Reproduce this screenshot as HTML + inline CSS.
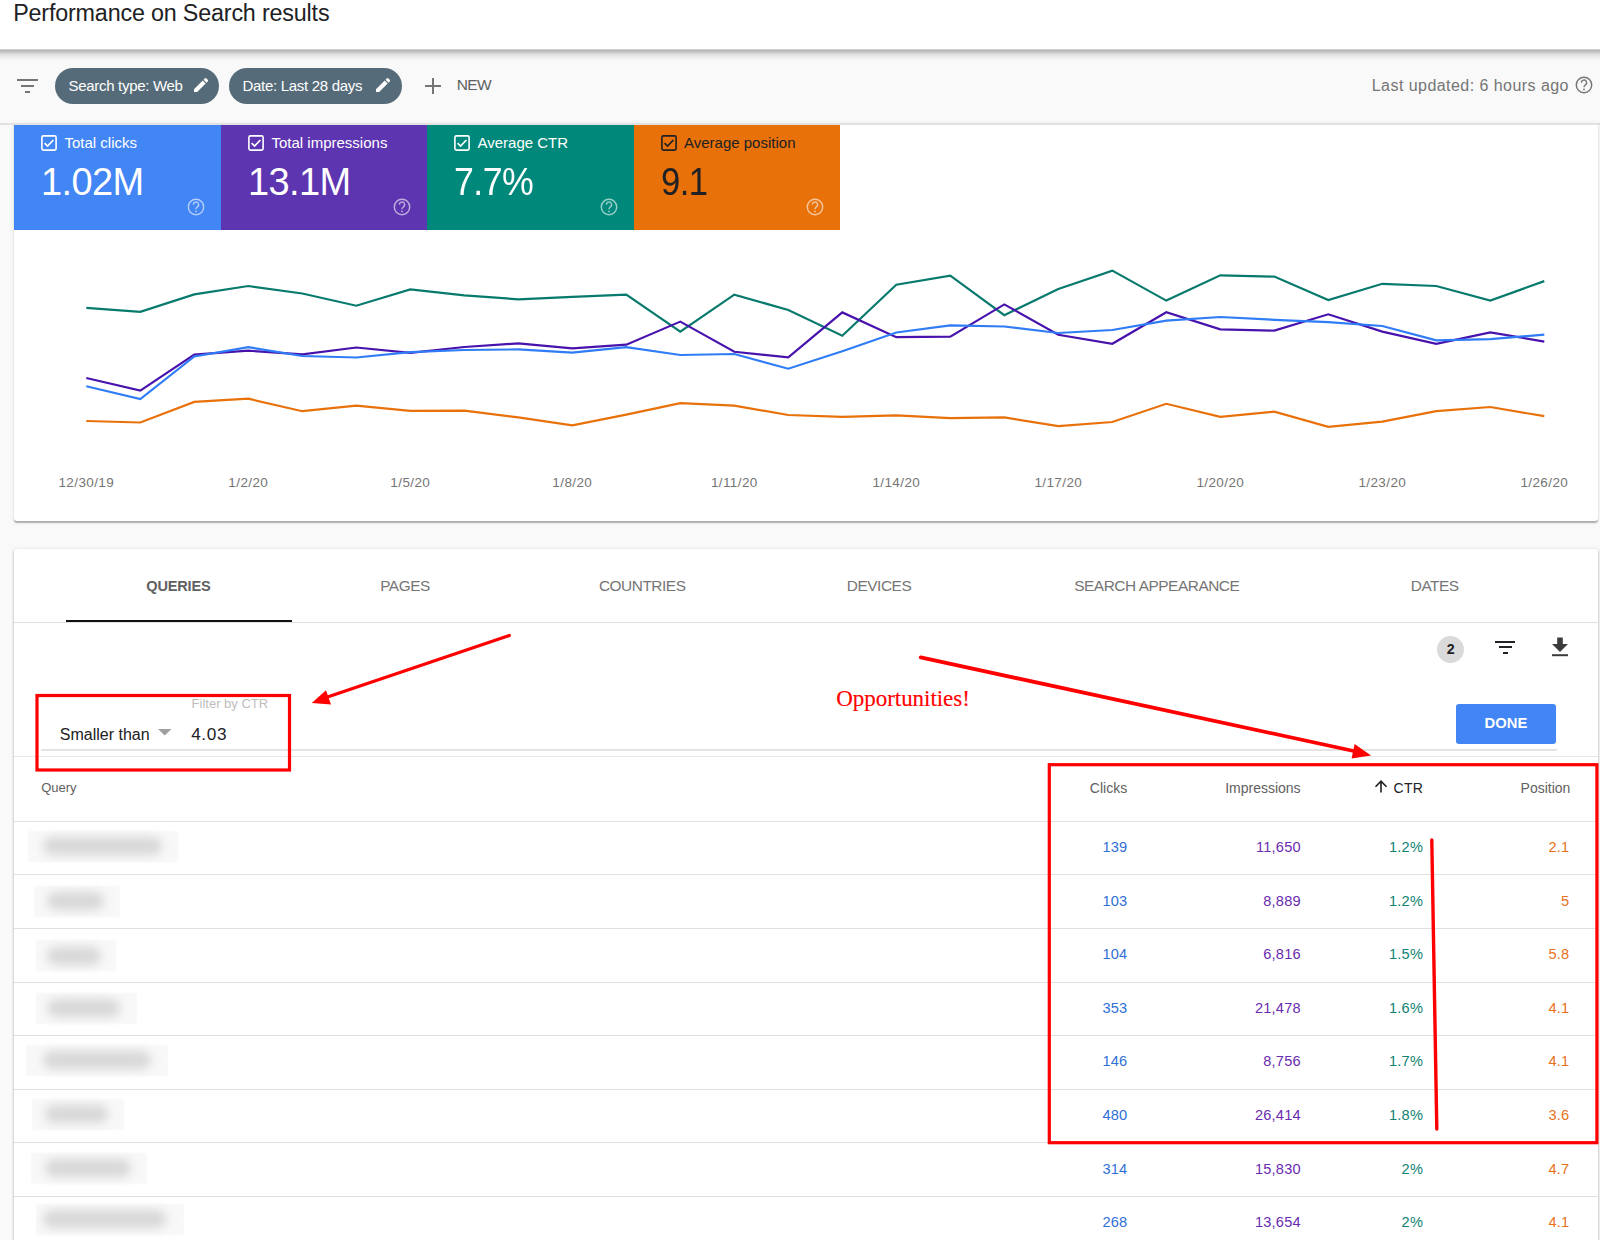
<!DOCTYPE html>
<html><head><meta charset="utf-8"><title>Performance on Search results</title>
<style>
html,body{margin:0;padding:0;}
body{width:1600px;height:1240px;overflow:hidden;position:relative;background:#f9f9f9;font-family:'Liberation Sans', sans-serif;}
.t{position:absolute;white-space:nowrap;}
</style></head><body>
<div style="position:absolute;left:0;top:0;width:1600px;height:50px;background:#fff;"></div><div class="t" style="top:1.88px;font-size:23.3px;line-height:23.3px;color:#202124;font-weight:400;letter-spacing:-0.17px;left:13.2px;">Performance on Search results</div>
<div style="position:absolute;left:0;top:49px;width:1600px;height:12px;background:linear-gradient(#dcdcdc 0,#b6b6b6 12%,#c6c6c6 25%,#dedede 45%,#efefef 70%,#f9f9f9 100%);"></div><div style="position:absolute;left:17px;top:79px;width:20.5px;height:2px;background:#757575"></div><div style="position:absolute;left:21px;top:85px;width:12.5px;height:2px;background:#757575"></div><div style="position:absolute;left:25px;top:91px;width:4.5px;height:2px;background:#757575"></div><div style="position:absolute;left:55px;top:68px;width:164px;height:36px;border-radius:18px;background:#566b79"></div><div class="t" style="top:78.30px;font-size:15px;line-height:15px;color:#fff;font-weight:400;letter-spacing:-0.3px;left:68.5px;">Search type: Web</div>
<div style="position:absolute;left:228.5px;top:68px;width:173.0px;height:36px;border-radius:18px;background:#566b79"></div><div class="t" style="top:78.30px;font-size:15px;line-height:15px;color:#fff;font-weight:400;letter-spacing:-0.3px;left:242.5px;">Date: Last 28 days</div>
<svg style="position:absolute;left:193.9px;top:78.2px" width="14.2" height="14.2" viewBox="3 3 18 18"><path fill="#fff" d="M3 17.25V21h3.75L17.81 9.94l-3.75-3.75L3 17.25zM20.71 7.04a.996.996 0 0 0 0-1.41l-2.34-2.34a.996.996 0 0 0-1.41 0l-1.83 1.83 3.75 3.75 1.83-1.83z"/></svg><svg style="position:absolute;left:375.9px;top:78.2px" width="14.2" height="14.2" viewBox="3 3 18 18"><path fill="#fff" d="M3 17.25V21h3.75L17.81 9.94l-3.75-3.75L3 17.25zM20.71 7.04a.996.996 0 0 0 0-1.41l-2.34-2.34a.996.996 0 0 0-1.41 0l-1.83 1.83 3.75 3.75 1.83-1.83z"/></svg><div style="position:absolute;left:425px;top:84.5px;width:16px;height:2px;background:#757575"></div><div style="position:absolute;left:432px;top:77.5px;width:2px;height:16px;background:#757575"></div><div class="t" style="top:77.48px;font-size:15.5px;line-height:15.5px;color:#616161;font-weight:400;letter-spacing:-0.65px;left:456.8px;">NEW</div>
<div class="t" style="top:77.76px;font-size:16px;line-height:16px;color:#757575;font-weight:400;letter-spacing:0.45px;right:31.5px;margin-right:-0.45px;">Last updated: 6 hours ago</div>
<svg style="position:absolute;left:1574.4px;top:75.2px" width="20" height="20" viewBox="-10 -10 20 20"><circle cx="0" cy="0" r="7.7" fill="none" stroke="#757575" stroke-width="1.45"/><path d="M-2.6 -2.3 A2.6 2.6 0 1 1 1.2 0 C0.3 0.6 0 1 0 2.2" fill="none" stroke="#757575" stroke-width="1.4"/><circle cx="0" cy="4.4" r="0.9" fill="#757575"/></svg><div style="position:absolute;left:0;top:122.5px;width:1600px;height:2px;background:#e2e2e2"></div><div style="position:absolute;left:14px;top:123px;width:1584px;height:398px;background:#fff;border-radius:0 0 3px 3px;box-shadow:0 1.5px 1px rgba(0,0,0,0.26),0 1px 4px rgba(0,0,0,0.1);"></div><div style="position:absolute;left:14px;top:123px;width:1584px;height:2px;background:#e2e2e2"></div><div style="position:absolute;left:14px;top:125px;width:207px;height:105px;background:#4285f4"></div><svg style="position:absolute;left:40px;top:134px" width="18" height="18" viewBox="0 0 18 18"><rect x="1.9" y="1.9" width="14.2" height="14.2" rx="1.5" fill="none" stroke="#fff" stroke-width="1.6"/><path d="M4.6 9.2 L7.6 12 L13.4 6" fill="none" stroke="#fff" stroke-width="1.7"/></svg><div class="t" style="top:135.00px;font-size:15px;line-height:15px;color:#fff;font-weight:400;left:64.5px;">Total clicks</div>
<div class="t" style="top:163.23px;font-size:38px;line-height:38px;color:#fff;font-weight:400;letter-spacing:-0.6px;left:41px;transform:scaleX(1);transform-origin:0 0;">1.02M</div>
<svg style="position:absolute;left:186.2px;top:197.4px" width="20" height="20" viewBox="-10 -10 20 20"><circle cx="0" cy="0" r="7.7" fill="none" stroke="rgba(255,255,255,0.6)" stroke-width="1.45"/><path d="M-2.6 -2.3 A2.6 2.6 0 1 1 1.2 0 C0.3 0.6 0 1 0 2.2" fill="none" stroke="rgba(255,255,255,0.6)" stroke-width="1.4"/><circle cx="0" cy="4.4" r="0.9" fill="rgba(255,255,255,0.6)"/></svg><div style="position:absolute;left:221px;top:125px;width:206px;height:105px;background:#5e35b1"></div><svg style="position:absolute;left:247px;top:134px" width="18" height="18" viewBox="0 0 18 18"><rect x="1.9" y="1.9" width="14.2" height="14.2" rx="1.5" fill="none" stroke="#fff" stroke-width="1.6"/><path d="M4.6 9.2 L7.6 12 L13.4 6" fill="none" stroke="#fff" stroke-width="1.7"/></svg><div class="t" style="top:135.00px;font-size:15px;line-height:15px;color:#fff;font-weight:400;left:271.5px;">Total impressions</div>
<div class="t" style="top:163.23px;font-size:38px;line-height:38px;color:#fff;font-weight:400;letter-spacing:-0.6px;left:248px;transform:scaleX(1);transform-origin:0 0;">13.1M</div>
<svg style="position:absolute;left:392.2px;top:197.4px" width="20" height="20" viewBox="-10 -10 20 20"><circle cx="0" cy="0" r="7.7" fill="none" stroke="rgba(255,255,255,0.6)" stroke-width="1.45"/><path d="M-2.6 -2.3 A2.6 2.6 0 1 1 1.2 0 C0.3 0.6 0 1 0 2.2" fill="none" stroke="rgba(255,255,255,0.6)" stroke-width="1.4"/><circle cx="0" cy="4.4" r="0.9" fill="rgba(255,255,255,0.6)"/></svg><div style="position:absolute;left:427px;top:125px;width:206.5px;height:105px;background:#00897b"></div><svg style="position:absolute;left:453px;top:134px" width="18" height="18" viewBox="0 0 18 18"><rect x="1.9" y="1.9" width="14.2" height="14.2" rx="1.5" fill="none" stroke="#fff" stroke-width="1.6"/><path d="M4.6 9.2 L7.6 12 L13.4 6" fill="none" stroke="#fff" stroke-width="1.7"/></svg><div class="t" style="top:135.00px;font-size:15px;line-height:15px;color:#fff;font-weight:400;left:477.5px;">Average CTR</div>
<div class="t" style="top:163.23px;font-size:38px;line-height:38px;color:#fff;font-weight:400;letter-spacing:-0.6px;left:454px;transform:scaleX(0.94);transform-origin:0 0;">7.7%</div>
<svg style="position:absolute;left:598.7px;top:197.4px" width="20" height="20" viewBox="-10 -10 20 20"><circle cx="0" cy="0" r="7.7" fill="none" stroke="rgba(255,255,255,0.6)" stroke-width="1.45"/><path d="M-2.6 -2.3 A2.6 2.6 0 1 1 1.2 0 C0.3 0.6 0 1 0 2.2" fill="none" stroke="rgba(255,255,255,0.6)" stroke-width="1.4"/><circle cx="0" cy="4.4" r="0.9" fill="rgba(255,255,255,0.6)"/></svg><div style="position:absolute;left:633.5px;top:125px;width:206.5px;height:105px;background:#e8710a"></div><svg style="position:absolute;left:659.5px;top:134px" width="18" height="18" viewBox="0 0 18 18"><rect x="1.9" y="1.9" width="14.2" height="14.2" rx="1.5" fill="none" stroke="#202124" stroke-width="1.6"/><path d="M4.6 9.2 L7.6 12 L13.4 6" fill="none" stroke="#202124" stroke-width="1.7"/></svg><div class="t" style="top:135.00px;font-size:15px;line-height:15px;color:#202124;font-weight:400;left:684.0px;">Average position</div>
<div class="t" style="top:163.23px;font-size:38px;line-height:38px;color:#202124;font-weight:400;letter-spacing:-0.6px;left:660.5px;transform:scaleX(0.91);transform-origin:0 0;">9.1</div>
<svg style="position:absolute;left:805.2px;top:197.4px" width="20" height="20" viewBox="-10 -10 20 20"><circle cx="0" cy="0" r="7.7" fill="none" stroke="rgba(255,255,255,0.6)" stroke-width="1.45"/><path d="M-2.6 -2.3 A2.6 2.6 0 1 1 1.2 0 C0.3 0.6 0 1 0 2.2" fill="none" stroke="rgba(255,255,255,0.6)" stroke-width="1.4"/><circle cx="0" cy="4.4" r="0.9" fill="rgba(255,255,255,0.6)"/></svg><svg style="position:absolute;left:0;top:0" width="1600" height="560"><polyline points="86.3,421.0 140.3,422.5 194.3,401.9 248.3,398.7 302.3,411.2 356.3,405.6 410.3,410.9 464.3,410.7 518.3,417.4 572.3,425.3 626.3,414.6 680.3,403.2 734.3,405.6 788.3,415.0 842.3,416.9 896.3,415.4 950.3,418.2 1004.3,417.4 1058.3,426.2 1112.3,422.0 1166.3,403.8 1220.3,416.9 1274.3,411.6 1328.3,426.8 1382.3,421.6 1436.3,411.2 1490.3,407.0 1544.3,416.2" fill="none" stroke="#e8710a" stroke-width="2.2" stroke-linejoin="miter"/><polyline points="86.3,307.8 140.3,311.9 194.3,294.4 248.3,286.0 302.3,293.5 356.3,305.7 410.3,289.4 464.3,295.4 518.3,299.3 572.3,296.9 626.3,294.6 680.3,331.6 734.3,294.6 788.3,310.0 842.3,335.7 896.3,284.7 950.3,275.7 1004.3,315.2 1058.3,289.0 1112.3,270.6 1166.3,300.6 1220.3,275.3 1274.3,276.6 1328.3,300.0 1382.3,283.8 1436.3,286.0 1490.3,300.6 1544.3,281.1" fill="none" stroke="#077a6d" stroke-width="2.2" stroke-linejoin="miter"/><polyline points="86.3,378.0 140.3,390.6 194.3,354.6 248.3,350.7 302.3,354.4 356.3,347.5 410.3,352.8 464.3,347.0 518.3,343.4 572.3,348.4 626.3,344.7 680.3,321.6 734.3,351.8 788.3,357.4 842.3,312.4 896.3,337.2 950.3,336.6 1004.3,304.4 1058.3,334.8 1112.3,343.8 1166.3,312.2 1220.3,329.3 1274.3,330.6 1328.3,314.3 1382.3,331.6 1436.3,343.8 1490.3,332.3 1544.3,341.6" fill="none" stroke="#4812ad" stroke-width="2.2" stroke-linejoin="miter"/><polyline points="86.3,386.3 140.3,399.0 194.3,356.5 248.3,347.1 302.3,356.0 356.3,357.5 410.3,352.2 464.3,350.0 518.3,349.4 572.3,352.6 626.3,347.1 680.3,355.0 734.3,354.0 788.3,368.7 842.3,351.2 896.3,332.5 950.3,325.4 1004.3,326.5 1058.3,333.0 1112.3,330.0 1166.3,320.7 1220.3,317.0 1274.3,319.8 1328.3,322.2 1382.3,326.0 1436.3,340.3 1490.3,339.1 1544.3,334.7" fill="none" stroke="#2f7cf6" stroke-width="2.2" stroke-linejoin="miter"/></svg><div class="t" style="top:476.07px;font-size:13.5px;line-height:13.5px;color:#757575;font-weight:400;letter-spacing:0.4px;left:-313.7px;width:800px;text-align:center;">12/30/19</div>
<div class="t" style="top:476.07px;font-size:13.5px;line-height:13.5px;color:#757575;font-weight:400;letter-spacing:0.4px;left:-151.7px;width:800px;text-align:center;">1/2/20</div>
<div class="t" style="top:476.07px;font-size:13.5px;line-height:13.5px;color:#757575;font-weight:400;letter-spacing:0.4px;left:10.300000000000011px;width:800px;text-align:center;">1/5/20</div>
<div class="t" style="top:476.07px;font-size:13.5px;line-height:13.5px;color:#757575;font-weight:400;letter-spacing:0.4px;left:172.29999999999995px;width:800px;text-align:center;">1/8/20</div>
<div class="t" style="top:476.07px;font-size:13.5px;line-height:13.5px;color:#757575;font-weight:400;letter-spacing:0.4px;left:334.29999999999995px;width:800px;text-align:center;">1/11/20</div>
<div class="t" style="top:476.07px;font-size:13.5px;line-height:13.5px;color:#757575;font-weight:400;letter-spacing:0.4px;left:496.29999999999995px;width:800px;text-align:center;">1/14/20</div>
<div class="t" style="top:476.07px;font-size:13.5px;line-height:13.5px;color:#757575;font-weight:400;letter-spacing:0.4px;left:658.3px;width:800px;text-align:center;">1/17/20</div>
<div class="t" style="top:476.07px;font-size:13.5px;line-height:13.5px;color:#757575;font-weight:400;letter-spacing:0.4px;left:820.3px;width:800px;text-align:center;">1/20/20</div>
<div class="t" style="top:476.07px;font-size:13.5px;line-height:13.5px;color:#757575;font-weight:400;letter-spacing:0.4px;left:982.3px;width:800px;text-align:center;">1/23/20</div>
<div class="t" style="top:476.07px;font-size:13.5px;line-height:13.5px;color:#757575;font-weight:400;letter-spacing:0.4px;left:1144.3px;width:800px;text-align:center;">1/26/20</div>
<div style="position:absolute;left:14px;top:548.5px;width:1584px;height:720px;background:#fff;border-radius:2px;box-shadow:0 1px 2px rgba(0,0,0,0.25),0 1px 3px 1px rgba(0,0,0,0.1);"></div><div class="t" style="top:579.04px;font-size:14.6px;line-height:14.6px;color:#616161;font-weight:700;letter-spacing:-0.2px;left:-221.6px;width:800px;text-align:center;">QUERIES</div>
<div class="t" style="top:578.36px;font-size:15.4px;line-height:15.4px;color:#757575;font-weight:400;letter-spacing:-0.45px;left:5px;width:800px;text-align:center;">PAGES</div>
<div class="t" style="top:578.36px;font-size:15.4px;line-height:15.4px;color:#757575;font-weight:400;letter-spacing:-0.45px;left:242.20000000000005px;width:800px;text-align:center;">COUNTRIES</div>
<div class="t" style="top:578.36px;font-size:15.4px;line-height:15.4px;color:#757575;font-weight:400;letter-spacing:-0.45px;left:479px;width:800px;text-align:center;">DEVICES</div>
<div class="t" style="top:578.36px;font-size:15.4px;line-height:15.4px;color:#757575;font-weight:400;letter-spacing:-0.45px;left:756.8px;width:800px;text-align:center;">SEARCH APPEARANCE</div>
<div class="t" style="top:578.36px;font-size:15.4px;line-height:15.4px;color:#757575;font-weight:400;letter-spacing:-0.45px;left:1034.7px;width:800px;text-align:center;">DATES</div>
<div style="position:absolute;left:14px;top:622px;width:1584px;height:1px;background:#e0e0e0"></div><div style="position:absolute;left:65.5px;top:620.2px;width:226px;height:2px;background:#111"></div><div style="position:absolute;left:1437px;top:636px;width:27px;height:27px;border-radius:50%;background:#dadada"></div><div class="t" style="top:641.58px;font-size:14.2px;line-height:14.2px;color:#202124;font-weight:700;left:1050.6px;width:800px;text-align:center;">2</div>
<div style="position:absolute;left:1494.7px;top:641px;width:20.700000000000045px;height:2px;background:#202124"></div><div style="position:absolute;left:1498.7px;top:646.4px;width:13.0px;height:2px;background:#202124"></div><div style="position:absolute;left:1503px;top:652.3px;width:4.5px;height:2px;background:#202124"></div><svg style="position:absolute;left:1552px;top:637px" width="16" height="20" viewBox="0 0 16 20"><path d="M5.2 0.5 H10.8 V7 H16 L8 15 L0 7 H5.2 Z" fill="#3c3c3c"/><rect x="0" y="17.2" width="16" height="2" fill="#3c3c3c"/></svg><div style="position:absolute;left:1456px;top:704px;width:100px;height:40px;border-radius:3px;background:#4285f4"></div><div class="t" style="top:716.47px;font-size:14.8px;line-height:14.8px;color:#fff;font-weight:700;left:1106px;width:800px;text-align:center;">DONE</div>
<div class="t" style="top:697.00px;font-size:13px;line-height:13px;color:#bdbdbd;font-weight:400;left:191.6px;">Filter by CTR</div>
<div class="t" style="top:726.86px;font-size:16px;line-height:16px;color:#202124;font-weight:400;left:59.75px;">Smaller than</div>
<svg style="position:absolute;left:158px;top:729px" width="14" height="7" viewBox="0 0 14 7"><path d="M0 0 H13.5 L6.75 6.5 Z" fill="#a0a0a0"/></svg><div class="t" style="top:725.64px;font-size:17.2px;line-height:17.2px;color:#202124;font-weight:400;letter-spacing:0.6px;left:191.2px;">4.03</div>
<div style="position:absolute;left:41px;top:749px;width:1515.5px;height:2px;background:#e4e4e4"></div><div style="position:absolute;left:14px;top:756px;width:1584px;height:1px;background:#e6e6e6"></div><div class="t" style="top:781.20px;font-size:13px;line-height:13px;color:#616161;font-weight:400;left:41.2px;">Query</div>
<div class="t" style="top:780.95px;font-size:14px;line-height:14px;color:#616161;font-weight:400;right:472.79999999999995px;">Clicks</div>
<div class="t" style="top:780.95px;font-size:14px;line-height:14px;color:#616161;font-weight:400;right:299.4000000000001px;">Impressions</div>
<div class="t" style="top:780.95px;font-size:14px;line-height:14px;color:#202124;font-weight:400;letter-spacing:0.3px;right:177.0999999999999px;margin-right:-0.3px;">CTR</div>
<svg style="position:absolute;left:1374px;top:780px" width="14" height="13" viewBox="0 0 14 13"><path d="M7 1.5 V12.5 M1.5 6.8 L7 1.2 L12.5 6.8" fill="none" stroke="#202124" stroke-width="1.6"/></svg><div class="t" style="top:780.95px;font-size:14px;line-height:14px;color:#616161;font-weight:400;right:29.59999999999991px;">Position</div>
<div style="position:absolute;left:14px;top:820.80px;width:1584px;height:1px;background:#e0e0e0"></div><div class="t" style="top:840.04px;font-size:14.6px;line-height:14.6px;color:#2f6fd6;font-weight:400;letter-spacing:0.2px;right:472.79999999999995px;margin-right:-0.2px;">139</div>
<div class="t" style="top:840.04px;font-size:14.6px;line-height:14.6px;color:#6a2bb0;font-weight:400;letter-spacing:0.2px;right:299.4000000000001px;margin-right:-0.2px;">11,650</div>
<div class="t" style="top:840.04px;font-size:14.6px;line-height:14.6px;color:#108272;font-weight:400;letter-spacing:0.2px;right:177.0999999999999px;margin-right:-0.2px;">1.2%</div>
<div class="t" style="top:840.04px;font-size:14.6px;line-height:14.6px;color:#e8711a;font-weight:400;letter-spacing:0.2px;right:30.90000000000009px;margin-right:-0.2px;">2.1</div>
<div style="position:absolute;left:28px;top:830.5px;width:150px;height:31px;background:#f8f8f8;filter:blur(1px)"></div><div style="position:absolute;left:43px;top:837.0px;width:119px;height:18px;border-radius:9px;background:#d8d8d8;filter:blur(5px)"></div><div style="position:absolute;left:14px;top:874.40px;width:1584px;height:1px;background:#e0e0e0"></div><div class="t" style="top:893.64px;font-size:14.6px;line-height:14.6px;color:#2f6fd6;font-weight:400;letter-spacing:0.2px;right:472.79999999999995px;margin-right:-0.2px;">103</div>
<div class="t" style="top:893.64px;font-size:14.6px;line-height:14.6px;color:#6a2bb0;font-weight:400;letter-spacing:0.2px;right:299.4000000000001px;margin-right:-0.2px;">8,889</div>
<div class="t" style="top:893.64px;font-size:14.6px;line-height:14.6px;color:#108272;font-weight:400;letter-spacing:0.2px;right:177.0999999999999px;margin-right:-0.2px;">1.2%</div>
<div class="t" style="top:893.64px;font-size:14.6px;line-height:14.6px;color:#e8711a;font-weight:400;letter-spacing:0.2px;right:30.90000000000009px;margin-right:-0.2px;">5</div>
<div style="position:absolute;left:34px;top:885.5px;width:86px;height:31px;background:#f8f8f8;filter:blur(1px)"></div><div style="position:absolute;left:47px;top:892.0px;width:57px;height:18px;border-radius:9px;background:#d8d8d8;filter:blur(5px)"></div><div style="position:absolute;left:14px;top:928.00px;width:1584px;height:1px;background:#e0e0e0"></div><div class="t" style="top:947.24px;font-size:14.6px;line-height:14.6px;color:#2f6fd6;font-weight:400;letter-spacing:0.2px;right:472.79999999999995px;margin-right:-0.2px;">104</div>
<div class="t" style="top:947.24px;font-size:14.6px;line-height:14.6px;color:#6a2bb0;font-weight:400;letter-spacing:0.2px;right:299.4000000000001px;margin-right:-0.2px;">6,816</div>
<div class="t" style="top:947.24px;font-size:14.6px;line-height:14.6px;color:#108272;font-weight:400;letter-spacing:0.2px;right:177.0999999999999px;margin-right:-0.2px;">1.5%</div>
<div class="t" style="top:947.24px;font-size:14.6px;line-height:14.6px;color:#e8711a;font-weight:400;letter-spacing:0.2px;right:30.90000000000009px;margin-right:-0.2px;">5.8</div>
<div style="position:absolute;left:36px;top:940.0px;width:80px;height:31px;background:#f8f8f8;filter:blur(1px)"></div><div style="position:absolute;left:47px;top:946.5px;width:54px;height:18px;border-radius:9px;background:#d8d8d8;filter:blur(5px)"></div><div style="position:absolute;left:14px;top:981.60px;width:1584px;height:1px;background:#e0e0e0"></div><div class="t" style="top:1000.84px;font-size:14.6px;line-height:14.6px;color:#2f6fd6;font-weight:400;letter-spacing:0.2px;right:472.79999999999995px;margin-right:-0.2px;">353</div>
<div class="t" style="top:1000.84px;font-size:14.6px;line-height:14.6px;color:#6a2bb0;font-weight:400;letter-spacing:0.2px;right:299.4000000000001px;margin-right:-0.2px;">21,478</div>
<div class="t" style="top:1000.84px;font-size:14.6px;line-height:14.6px;color:#108272;font-weight:400;letter-spacing:0.2px;right:177.0999999999999px;margin-right:-0.2px;">1.6%</div>
<div class="t" style="top:1000.84px;font-size:14.6px;line-height:14.6px;color:#e8711a;font-weight:400;letter-spacing:0.2px;right:30.90000000000009px;margin-right:-0.2px;">4.1</div>
<div style="position:absolute;left:36px;top:992.5px;width:101px;height:31px;background:#f8f8f8;filter:blur(1px)"></div><div style="position:absolute;left:47px;top:999.0px;width:73px;height:18px;border-radius:9px;background:#d8d8d8;filter:blur(5px)"></div><div style="position:absolute;left:14px;top:1035.20px;width:1584px;height:1px;background:#e0e0e0"></div><div class="t" style="top:1054.44px;font-size:14.6px;line-height:14.6px;color:#2f6fd6;font-weight:400;letter-spacing:0.2px;right:472.79999999999995px;margin-right:-0.2px;">146</div>
<div class="t" style="top:1054.44px;font-size:14.6px;line-height:14.6px;color:#6a2bb0;font-weight:400;letter-spacing:0.2px;right:299.4000000000001px;margin-right:-0.2px;">8,756</div>
<div class="t" style="top:1054.44px;font-size:14.6px;line-height:14.6px;color:#108272;font-weight:400;letter-spacing:0.2px;right:177.0999999999999px;margin-right:-0.2px;">1.7%</div>
<div class="t" style="top:1054.44px;font-size:14.6px;line-height:14.6px;color:#e8711a;font-weight:400;letter-spacing:0.2px;right:30.90000000000009px;margin-right:-0.2px;">4.1</div>
<div style="position:absolute;left:26px;top:1044.5px;width:142px;height:31px;background:#f8f8f8;filter:blur(1px)"></div><div style="position:absolute;left:43px;top:1051.0px;width:108px;height:18px;border-radius:9px;background:#d8d8d8;filter:blur(5px)"></div><div style="position:absolute;left:14px;top:1088.80px;width:1584px;height:1px;background:#e0e0e0"></div><div class="t" style="top:1108.04px;font-size:14.6px;line-height:14.6px;color:#2f6fd6;font-weight:400;letter-spacing:0.2px;right:472.79999999999995px;margin-right:-0.2px;">480</div>
<div class="t" style="top:1108.04px;font-size:14.6px;line-height:14.6px;color:#6a2bb0;font-weight:400;letter-spacing:0.2px;right:299.4000000000001px;margin-right:-0.2px;">26,414</div>
<div class="t" style="top:1108.04px;font-size:14.6px;line-height:14.6px;color:#108272;font-weight:400;letter-spacing:0.2px;right:177.0999999999999px;margin-right:-0.2px;">1.8%</div>
<div class="t" style="top:1108.04px;font-size:14.6px;line-height:14.6px;color:#e8711a;font-weight:400;letter-spacing:0.2px;right:30.90000000000009px;margin-right:-0.2px;">3.6</div>
<div style="position:absolute;left:32px;top:1098.5px;width:92px;height:31px;background:#f8f8f8;filter:blur(1px)"></div><div style="position:absolute;left:45px;top:1105.0px;width:63px;height:18px;border-radius:9px;background:#d8d8d8;filter:blur(5px)"></div><div style="position:absolute;left:14px;top:1142.40px;width:1584px;height:1px;background:#e0e0e0"></div><div class="t" style="top:1161.64px;font-size:14.6px;line-height:14.6px;color:#2f6fd6;font-weight:400;letter-spacing:0.2px;right:472.79999999999995px;margin-right:-0.2px;">314</div>
<div class="t" style="top:1161.64px;font-size:14.6px;line-height:14.6px;color:#6a2bb0;font-weight:400;letter-spacing:0.2px;right:299.4000000000001px;margin-right:-0.2px;">15,830</div>
<div class="t" style="top:1161.64px;font-size:14.6px;line-height:14.6px;color:#108272;font-weight:400;letter-spacing:0.2px;right:177.0999999999999px;margin-right:-0.2px;">2%</div>
<div class="t" style="top:1161.64px;font-size:14.6px;line-height:14.6px;color:#e8711a;font-weight:400;letter-spacing:0.2px;right:30.90000000000009px;margin-right:-0.2px;">4.7</div>
<div style="position:absolute;left:31px;top:1152.5px;width:116px;height:31px;background:#f8f8f8;filter:blur(1px)"></div><div style="position:absolute;left:45px;top:1159.0px;width:86px;height:18px;border-radius:9px;background:#d8d8d8;filter:blur(5px)"></div><div style="position:absolute;left:14px;top:1196.00px;width:1584px;height:1px;background:#e0e0e0"></div><div class="t" style="top:1215.24px;font-size:14.6px;line-height:14.6px;color:#2f6fd6;font-weight:400;letter-spacing:0.2px;right:472.79999999999995px;margin-right:-0.2px;">268</div>
<div class="t" style="top:1215.24px;font-size:14.6px;line-height:14.6px;color:#6a2bb0;font-weight:400;letter-spacing:0.2px;right:299.4000000000001px;margin-right:-0.2px;">13,654</div>
<div class="t" style="top:1215.24px;font-size:14.6px;line-height:14.6px;color:#108272;font-weight:400;letter-spacing:0.2px;right:177.0999999999999px;margin-right:-0.2px;">2%</div>
<div class="t" style="top:1215.24px;font-size:14.6px;line-height:14.6px;color:#e8711a;font-weight:400;letter-spacing:0.2px;right:30.90000000000009px;margin-right:-0.2px;">4.1</div>
<div style="position:absolute;left:36px;top:1203.5px;width:148px;height:31px;background:#f8f8f8;filter:blur(1px)"></div><div style="position:absolute;left:43px;top:1210.0px;width:123px;height:18px;border-radius:9px;background:#d8d8d8;filter:blur(5px)"></div><svg style="position:absolute;left:0;top:0" width="1600" height="1240"><rect x="37" y="695.5" width="252.5" height="74.5" fill="none" stroke="#f00" stroke-width="3.2"/><rect x="1049.3" y="764.7" width="547.6" height="378" fill="none" stroke="#f00" stroke-width="3.2"/><line x1="509.3" y1="635.5" x2="326" y2="697.5" stroke="#f00" stroke-width="3.3" stroke-linecap="round"/><path d="M311.75 703 L326 690.2 L331 704.4 Z" fill="#f00"/><line x1="920.7" y1="657.4" x2="1356" y2="751.5" stroke="#f00" stroke-width="3.8" stroke-linecap="round"/><path d="M1371.1 755.4 L1354.6 744.1 L1351.6 758.6 Z" fill="#f00"/><line x1="1431.8" y1="840" x2="1436.8" y2="1129" stroke="#f00" stroke-width="3.4" stroke-linecap="round"/></svg><div class="t" style="top:686.64px;font-size:23px;line-height:23px;color:#f00;font-weight:400;letter-spacing:-0.05px;left:836.3px;font-family:'Liberation Serif', serif;-webkit-text-stroke:0.15px #f00;">Opportunities!</div>

</body></html>
